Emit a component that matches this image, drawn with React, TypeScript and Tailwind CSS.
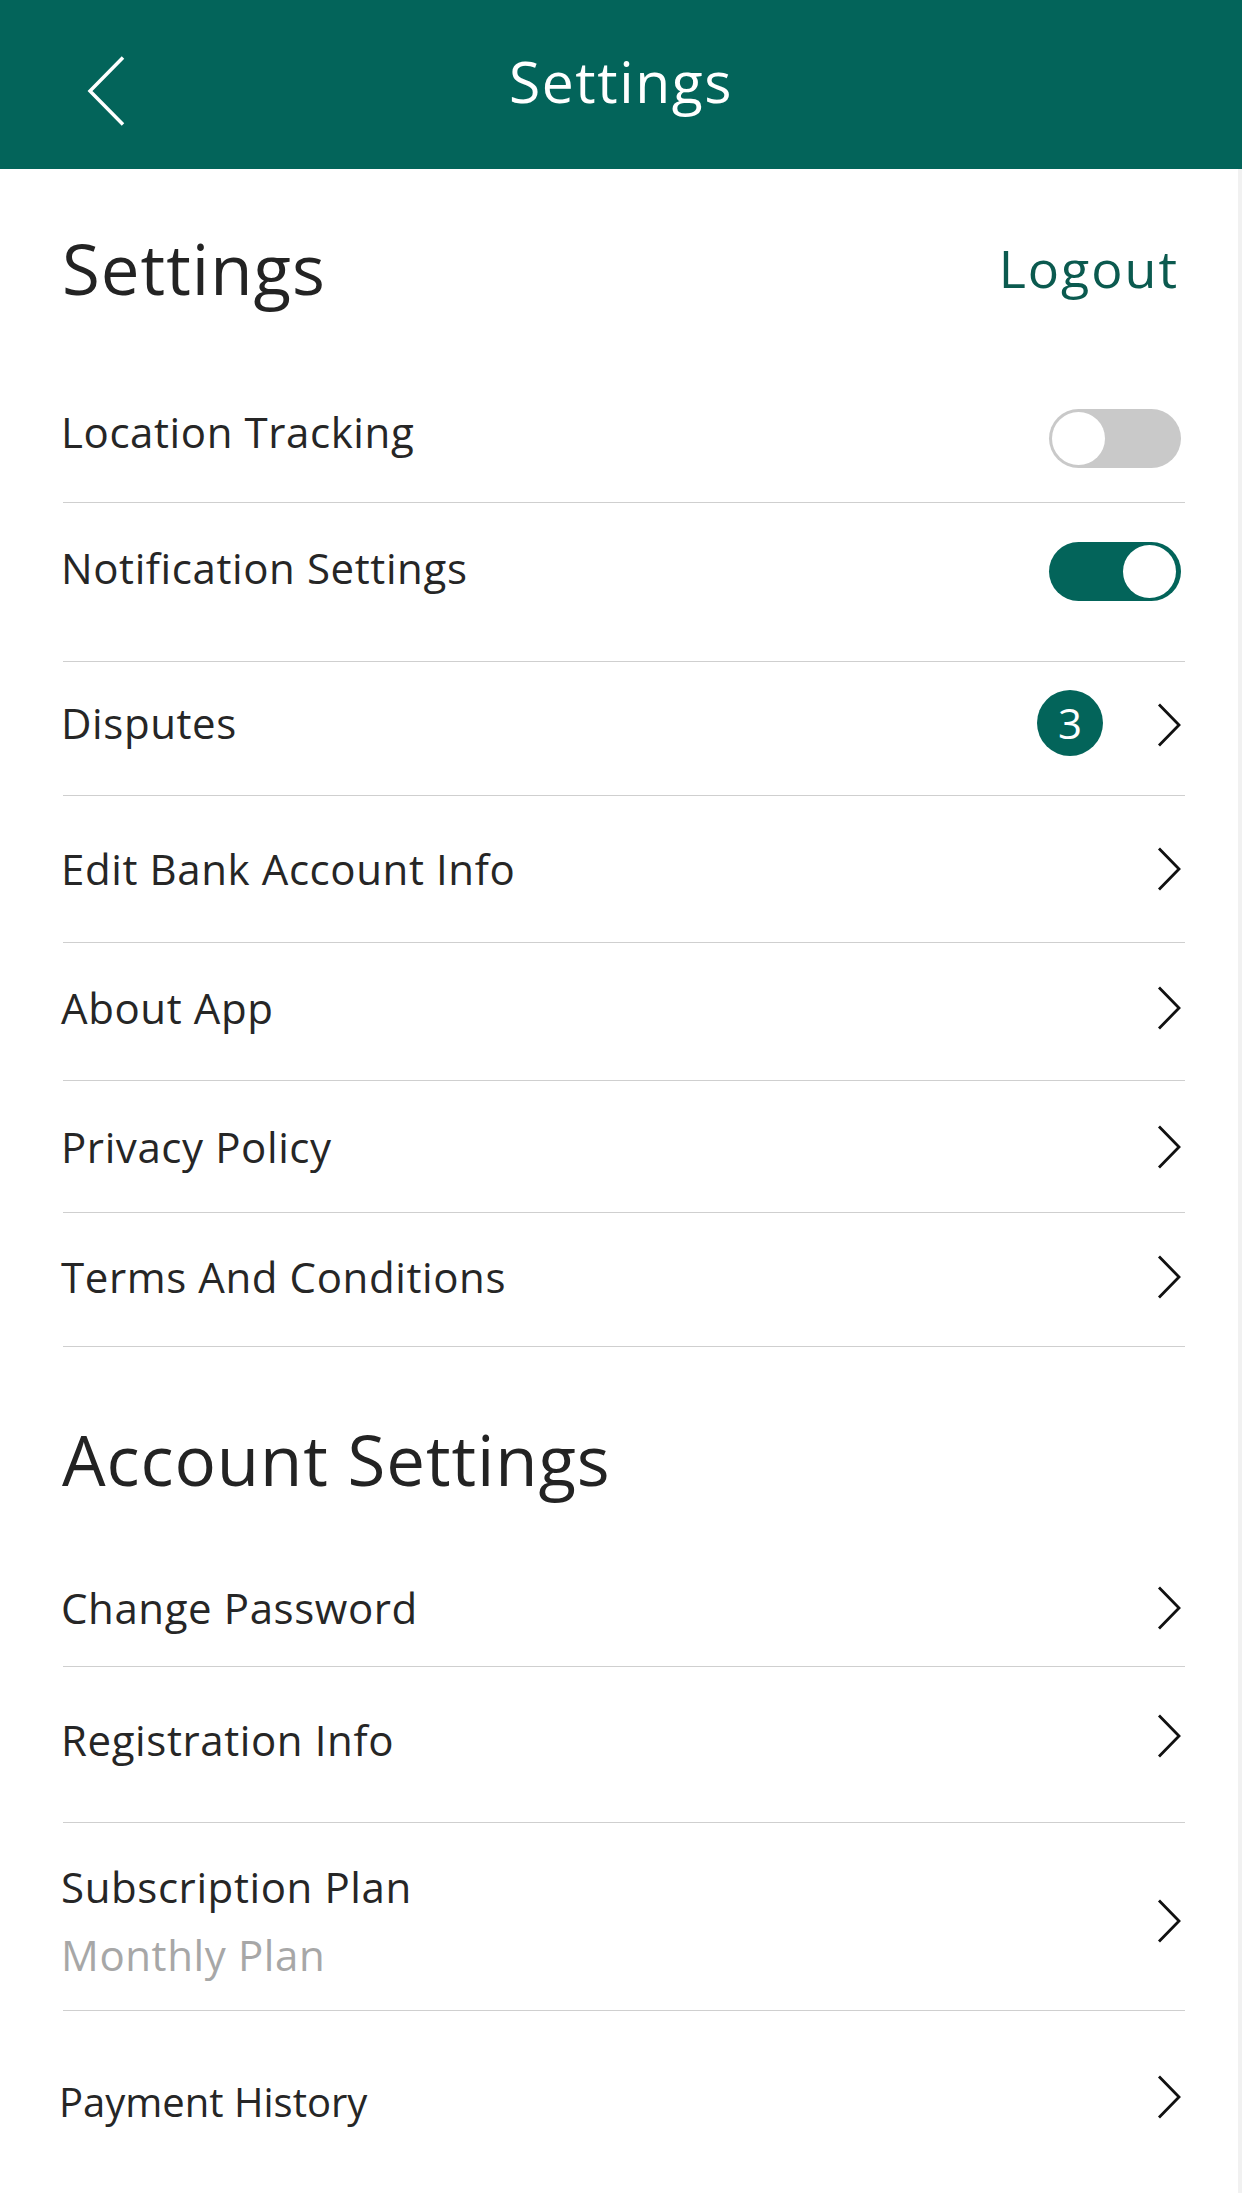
import React from 'react'

function Chevron() {
  return (
    <svg width="24" height="44" viewBox="0 0 24 44" className="mr-[4px] shrink-0">
      <path d="M2 1.5 L22 22 L2 42.5" fill="none" stroke="#111" strokeWidth="2.8" />
    </svg>
  )
}

function Toggle({ on }: { on: boolean }) {
  return (
    <div
      className={
        on
          ? 'mr-[4px] flex h-[59px] w-[132px] items-center justify-end rounded-full bg-[#03645a] p-[3px] pr-[5px]'
          : 'mr-[4px] flex h-[59px] w-[132px] items-center justify-start rounded-full bg-[#c9c9c9] p-[3px]'
      }
    >
      <div className="h-[53px] w-[53px] rounded-full bg-white" />
    </div>
  )
}

function Row({
  label,
  h,
  pad,
  right,
}: {
  label: string
  h: string
  pad?: string
  right: React.ReactNode
}) {
  return (
    <div className={`flex items-center justify-between border-b border-[#cfcfcf] ${h} ${pad ?? ''}`}>
      <span className="-ml-[2px] text-[42px] leading-none tracking-[0.6px] text-[#262626]">{label}</span>
      {right}
    </div>
  )
}

export default function App() {
  return (
    <div className="min-h-[2208px] w-[1242px] bg-white font-['Open_Sans',sans-serif]">
      {/* Top bar */}
      <header className="grid h-[169px] grid-cols-[1fr_auto_1fr] items-center bg-[#03645a] pb-[7px]">
        <div className="pl-[87px] pt-[20px]">
          <svg width="38" height="70" viewBox="0 0 38 70">
            <path d="M36 1.5 L3 35 L36 68.5" fill="none" stroke="#fff" strokeWidth="3.5" />
          </svg>
        </div>
        <h1 className="text-[57px] leading-none tracking-[1.6px] text-white">Settings</h1>
        <div />
      </header>

      <main className="border-r-4 border-[#f1f1f1] pl-[63px] pr-[53px]">
        <div className="flex h-[193px] items-center justify-between pt-[5px]">
          <h2 className="-ml-[1px] text-[69px] leading-none tracking-[1px] text-[#232323]">Settings</h2>
          <button className="mr-[6px] text-[52px] leading-none tracking-[2px] text-[#0b5a4f]">Logout</button>
        </div>

        <Row label="Location Tracking" h="h-[141px]" right={<div className="mt-[13px]"><Toggle on={false} /></div>} />
        <Row label="Notification Settings" h="h-[159px]" pad="pb-[28px]" right={<div className="mt-[6px]"><Toggle on /></div>} />
        <Row
          label="Disputes"
          h="h-[134px]"
          pad="pb-[12px]"
          right={
            <div className="flex items-center gap-[54px]">
              <span className="flex h-[66px] w-[66px] items-center justify-center rounded-full bg-[#03645a] text-[42px] leading-none text-white">
                3
              </span>
              <div className="mt-[5px]"><Chevron /></div>
            </div>
          }
        />
        <Row label="Edit Bank Account Info" h="h-[147px]" right={<Chevron />} />
        <Row label="About App" h="h-[138px]" pad="pb-[8px]" right={<Chevron />} />
        <Row label="Privacy Policy" h="h-[132px]" right={<Chevron />} />
        <Row label="Terms And Conditions" h="h-[134px]" pad="pb-[6px]" right={<Chevron />} />

        <div className="flex h-[202px] items-center pt-[22px]">
          <h2 className="-ml-[1px] text-[69px] leading-none tracking-[0.9px] text-[#232323]">Account Settings</h2>
        </div>

        <Row label="Change Password" h="h-[118px]" right={<Chevron />} />
        <Row label="Registration Info" h="h-[156px]" pad="pb-[10px]" right={<div className="-mt-[8px]"><Chevron /></div>} />

        <div className="flex h-[188px] items-center justify-between border-b border-[#cfcfcf] pt-[8px]">
          <div className="-ml-[2px] flex flex-col text-[42px] leading-[68px] tracking-[0.6px]">
            <span className="text-[#262626]">Subscription Plan</span>
            <span className="text-[#a7a7a7]">Monthly Plan</span>
          </div>
          <Chevron />
        </div>

        <div className="flex h-[182px] items-center justify-between">
          <span className="-ml-[4px] text-[40px] leading-none text-[#262626]">Payment History</span>
          <div className="-mt-[10px]"><Chevron /></div>
        </div>
      </main>
    </div>
  )
}
